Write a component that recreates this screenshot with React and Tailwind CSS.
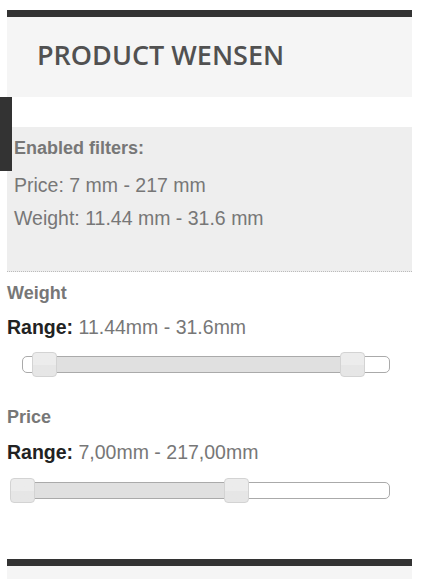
import React from 'react';

const arial = { fontFamily: '"Liberation Sans", Arial, sans-serif' };

const Handle = ({ left }) => (
  <div
    className="absolute top-[-5px] w-[25px] h-[25px] rounded-[4px] border border-[#d3d3d3] bg-gradient-to-b from-[#ececec] from-50% to-[#e6e6e6] to-50%"
    style={{ left }}
  />
);

const Slider = ({ className, width, fillFrom, fillTo, handles }) => (
  <div
    className={`relative h-[17px] rounded-[5px] border border-[#aaaaaa] bg-white ${className}`}
    style={{ width }}
  >
    <div className="absolute top-0 bottom-0 bg-[#e0e0e0]" style={{ left: fillFrom, width: fillTo - fillFrom }} />
    {handles.map((h) => (
      <Handle key={h} left={h} />
    ))}
  </div>
);

export default function App() {
  return (
    <div className="relative w-[422px] h-[579px] bg-white pt-[10px] pl-[7px] pr-[10px] overflow-hidden" style={arial}>
      <div className="border-t-[7px] border-[#333333] bg-[#f5f5f5] h-[87px] pl-[30px] pt-[24px]">
        <h2
          className="text-[27px] leading-[27px] font-semibold text-[#515151]"
          style={{ fontFamily: '"Open Sans", sans-serif' }}
        >
          PRODUCT WENSEN
        </h2>
      </div>

      <div className="absolute left-0 top-[97px] w-[12px] h-[74px] bg-[#333333]" />

      <div className="mt-[30px] h-[145px] bg-[#eeeeee] border-b border-dotted border-[#bbbbbb] px-[7px] pt-[9px] text-[#777777]">
        <p className="text-[18px] leading-[24px] font-bold">Enabled filters:</p>
        <div className="mt-[9px] text-[19.5px] leading-[33px]">
          <p>Price: 7 mm - 217 mm</p>
          <p>Weight: 11.44 mm - 31.6 mm</p>
        </div>
      </div>

      <div className="pt-[9px]">
        <h3 className="text-[18px] leading-[24px] font-bold text-[#777777]">Weight</h3>
        <p className="mt-[8px] text-[19.5px] leading-[28px] text-[#777777]">
          <span className="font-bold text-[#222222]">Range:</span> 11.44mm - 31.6mm
        </p>
        <Slider className="mt-[15px] ml-[15px]" width={368} fillFrom={22} fillTo={331} handles={[9, 317]} />
      </div>

      <div className="pt-[32px]">
        <h3 className="text-[18px] leading-[24px] font-bold text-[#777777]">Price</h3>
        <p className="mt-[9px] text-[19.5px] leading-[28px] text-[#777777]">
          <span className="font-bold text-[#222222]">Range:</span> 7,00mm - 217,00mm
        </p>
        <Slider className="mt-[16px] ml-[3px]" width={380} fillFrom={0} fillTo={227} handles={[-1, 213]} />
      </div>

      <div className="mt-[60px] border-t-[7px] border-[#333333] bg-[#f5f5f5] h-[40px]" />
    </div>
  );
}
